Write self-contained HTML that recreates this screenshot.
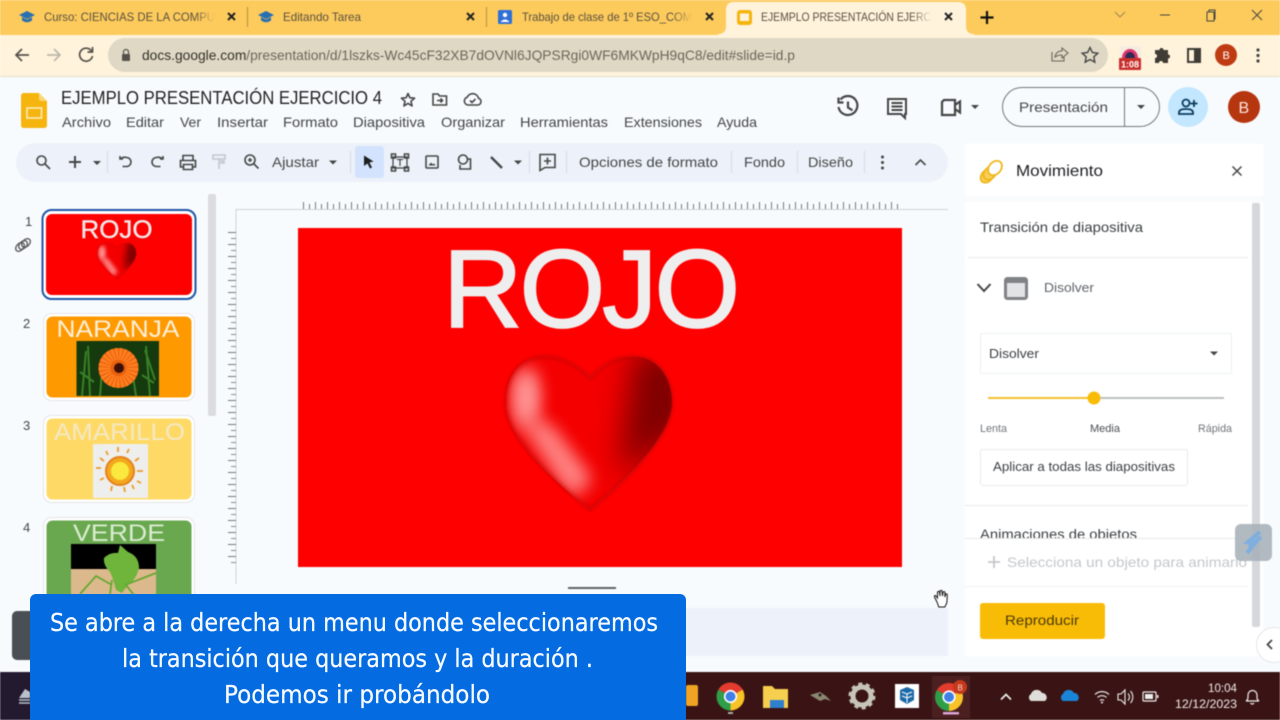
<!DOCTYPE html>
<html lang="es"><head><meta charset="utf-8"><title>Presentación</title>
<style>
html,body{margin:0;padding:0;width:1280px;height:720px;overflow:hidden;background:#f8fbfd}
svg{display:block;position:absolute;left:0;top:0}
text{font-family:"Liberation Sans",Arial,sans-serif;fill:#3c4043}
.i{fill:none;stroke:#444746;stroke-width:1.6}
.f{fill:#444746;stroke:none}
.m{font-size:14px;fill:#444746}
.t{font-size:12px;fill:#5a5040}
.cap{font-family:"DejaVu Sans","Liberation Sans",sans-serif;font-size:25px;fill:#f6faff;stroke:#f6faff;stroke-width:.25}
</style></head><body>
<svg width="1280" height="720" viewBox="0 0 1280 720" xmlns="http://www.w3.org/2000/svg" style="filter:blur(.45px)">
<defs>
<filter id="b1" filterUnits="userSpaceOnUse" x="0" y="0" width="1280" height="720"><feGaussianBlur stdDeviation="1.500"/></filter>
<filter id="b2" filterUnits="userSpaceOnUse" x="0" y="0" width="1280" height="720"><feGaussianBlur stdDeviation="9"/></filter>
<filter id="b3" filterUnits="userSpaceOnUse" x="0" y="0" width="1280" height="720"><feGaussianBlur stdDeviation="15"/></filter>
<linearGradient id="fade" x1="0" x2="1"><stop offset="0" stop-color="#fdcb5c" stop-opacity="0"/><stop offset="1" stop-color="#fdcb5c"/></linearGradient>
<linearGradient id="fade2" x1="0" x2="1"><stop offset="0" stop-color="#fff3dc" stop-opacity="0"/><stop offset="1" stop-color="#fff3dc"/></linearGradient>
<clipPath id="anim"><rect x="970" y="520" width="280" height="18"/></clipPath>
<clipPath id="hc"><path d="M590 378C575 362 555 355 540 357C519 359 505 378 506 405C507 440 560 485 590 510C620 485 670 440 672 405C673 378 658 358 638 357C622 355 605 362 590 378Z"/></clipPath>
<g id="chrome"><path d="M0 0L-12.100-7A14 14 0 0 1 12.100-7Z" fill="#e33b2e"/><path d="M0 0L12.100-7A14 14 0 0 1 0 14Z" fill="#f7c327"/><path d="M0 0L0 14A14 14 0 0 1-12.100-7Z" fill="#2f9e48"/><circle r="6.600" fill="#fff"/><circle r="5" fill="#3f7fe6"/></g>
<path id="cap" d="M0-6L8-2 0 2-8-2Z M-5 0V3.500Q0 7 5 3.500V0L0 2.600Z"/>
<g id="heart">
<g clip-path="url(#hc)">
<rect x="490" y="340" width="200" height="180" fill="#f40000"/>
<path d="M635 350L695 350 695 425 620 475 625 420Z" fill="#800000" filter="url(#b3)"/>
<ellipse cx="526" cy="398" rx="10" ry="28" fill="#ff9a9a" filter="url(#b2)"/>
<ellipse cx="526" cy="398" rx="10" ry="28" fill="#ff9a9a" filter="url(#b2)"/>
<path d="M522 420L548 425 590 480 572 495Z" fill="#ff8c8c" filter="url(#b2)"/>
<path d="M522 420L548 425 590 480 572 495Z" fill="#ff8c8c" opacity=".5" filter="url(#b2)"/>
</g>
<path d="M590 378C575 362 555 355 540 357C519 359 505 378 506 405C507 440 560 485 590 510C620 485 670 440 672 405C673 378 658 358 638 357C622 355 605 362 590 378Z" fill="none" stroke="#a80a0a" stroke-width="2.500" opacity=".55" filter="url(#b1)"/>
</g>
</defs>

<!-- page -->
<rect width="1280" height="720" fill="#f8fbfd"/>

<!-- tab strip -->
<rect width="1280" height="35" fill="#fdcb5c"/>
<path d="M718 34Q726 34 726 26V10Q726 2 734 2H958Q966 2 966 10V26Q966 34 974 34V35H718Z" fill="#fff3dc"/>
<use href="#cap" x="27" y="17" fill="#2a6fb0"/>
<text x="44" y="21" class="t" textLength="171" lengthAdjust="spacingAndGlyphs">Curso: CIENCIAS DE LA COMPU</text>
<rect x="195" y="8" width="20" height="18" fill="url(#fade)"/>
<path d="M228 13l7 7m0-7l-7 7" stroke="#222" stroke-width="2"/>
<rect x="247" y="7" width="1" height="20" fill="#b09040"/>
<use href="#cap" x="266" y="17" fill="#2a6fb0"/>
<text x="283" y="21" class="t" textLength="78" lengthAdjust="spacingAndGlyphs">Editando Tarea</text>
<path d="M467 13l7 7m0-7l-7 7" stroke="#222" stroke-width="2"/>
<rect x="486" y="7" width="1" height="20" fill="#b09040"/>
<rect x="498" y="10" width="14" height="14" rx="1.500" fill="#2f6fd8"/><circle cx="505" cy="15" r="2.200" fill="#fff"/><path d="M500.500 22q4.500-5 9 0z" fill="#fff"/>
<text x="522" y="21" class="t" textLength="170" lengthAdjust="spacingAndGlyphs">Trabajo de clase de 1º ESO_COM</text>
<rect x="672" y="8" width="20" height="18" fill="url(#fade)"/>
<path d="M706 13l7 7m0-7l-7 7" stroke="#222" stroke-width="2"/>
<rect x="737" y="10" width="15" height="15" rx="3" fill="#f5b50f"/><rect x="740" y="13.500" width="9" height="7.500" fill="#fff3dc"/>
<text x="761" y="21" class="t" textLength="170" lengthAdjust="spacingAndGlyphs">EJEMPLO PRESENTACIÓN EJERC</text>
<rect x="912" y="8" width="20" height="18" fill="url(#fade2)"/>
<path d="M945 13l7 7m0-7l-7 7" stroke="#222" stroke-width="2"/>
<path d="M987 11v13M980.500 17.500h13" stroke="#111" stroke-width="2.200"/>
<path d="M1115 12l5 5 5-5" fill="none" stroke="#9c8750" stroke-width="1"/>
<path d="M1160 15h10" stroke="#444" stroke-width="1"/>
<path d="M1207 12h7v9h-7zM1209 12v-2h6v9h-1" fill="none" stroke="#444" stroke-width="1"/>
<path d="M1252 10l10 10m0-10l-10 10" stroke="#444" stroke-width="1"/>

<!-- address bar -->
<rect y="35" width="1280" height="41" fill="#fff3dc"/>
<rect y="76" width="1280" height="1" fill="#e5ddcb"/>
<rect x="108" y="38" width="1000" height="34" rx="17" fill="#dfd8c5"/>
<path d="M29 55H16m6-6l-6 6 6 6" fill="none" stroke="#55514a" stroke-width="1.700"/>
<path d="M47 55h13m-6-6l6 6-6 6" fill="none" stroke="#bdb7a8" stroke-width="1.700"/>
<path d="M91.500 51A6.500 6.500 0 1 0 92.500 56M92.500 47v5h-5" fill="none" stroke="#55514a" stroke-width="1.700"/>
<rect x="122" y="54" width="8" height="7" rx="1" fill="#55514a"/><path d="M123.500 54v-2a2.500 2.500 0 0 1 5 0v2" fill="none" stroke="#55514a" stroke-width="1.200"/>
<text x="142" y="60" font-size="14" textLength="653" lengthAdjust="spacingAndGlyphs" style="fill:#6d675a"><tspan style="fill:#33302a">docs.google.com</tspan>/presentation/d/1lszks-Wc45cF32XB7dOVNl6JQPSRgi0WF6MKWpH9qC8/edit#slide=id.p</text>
<path d="M1052 52v9h12v-4M1055 57q1-6 7-6v-3l6 5-6 5v-3q-4 0-7 2z" fill="none" stroke="#6a665c" stroke-width="1.100"/>
<path d="M1090 47.500l2.400 5 5.400.7-4 3.700 1 5.300-4.800-2.700-4.800 2.700 1-5.300-4-3.700 5.400-.7z" fill="none" stroke="#444" stroke-width="1.400"/>
<rect x="1120" y="46" width="21" height="24" rx="2" fill="#f4ece0"/><path d="M1122 58a8 9 0 0 1 16 0z" fill="#e0356f"/><path d="M1125 58a5 6 0 0 1 10 0z" fill="#2b2b55"/>
<rect x="1119" y="58" width="22" height="12" rx="1" fill="#c9302c"/><text x="1121" y="67.500" font-size="9" font-weight="bold" style="fill:#fff">1:08</text>
<path d="M1155 50h4.500a2 2 0 0 1 4 0h4.500v4.500a2 2 0 0 1 0 4v4.500h-5a2 2 0 0 0-4 0H1155v-5a2 2 0 0 0 0-4z" fill="#3f3c36"/>
<rect x="1188" y="49" width="12" height="13" fill="none" stroke="#3f3c36" stroke-width="2"/><rect x="1194" y="49" width="6" height="13" fill="#3f3c36"/>
<circle cx="1226" cy="55" r="11" fill="#bf3b12"/><text x="1222.500" y="59" font-size="11" style="fill:#fff">B</text>
<circle cx="1258" cy="50" r="1.600" fill="#444"/><circle cx="1258" cy="55.500" r="1.600" fill="#444"/><circle cx="1258" cy="61" r="1.600" fill="#444"/>

<!-- docs header -->
<path d="M24 93H39L47 101V125Q47 128 44 128H24Q21 128 21 125V96Q21 93 24 93Z" fill="#f6b40f"/>
<path d="M39 93L47 101H41Q39 101 39 99Z" fill="#fbd873"/>
<rect x="27" y="108" width="14.500" height="10" fill="none" stroke="#fce5a6" stroke-width="1.800"/>
<text x="61" y="104" font-size="18" textLength="321" lengthAdjust="spacingAndGlyphs" style="fill:#1f1f1f">EJEMPLO PRESENTACIÓN EJERCICIO 4</text>
<path d="M408 93.500l1.900 4.300 4.700.4-3.600 3.100 1.100 4.600-4.100-2.500-4.100 2.500 1.100-4.600-3.600-3.100 4.700-.4z" class="i" stroke-linejoin="round"/>
<path d="M433 94h5l1.500 2h7v9h-13.500zM437 100.500h5.500m-2-2l2 2-2 2" class="i" stroke-width="1.300"/>
<path d="M468 105a4 4 0 0 1-.8-7.800 6 6 0 0 1 11.300 1 3.500 3.500 0 0 1-.5 6.800zM470 100.500l2 2 3.500-3.500" class="i" stroke-width="1.300"/>
<text x="62" y="127" class="m" textLength="49" lengthAdjust="spacingAndGlyphs">Archivo</text>
<text x="126" y="127" class="m" textLength="38" lengthAdjust="spacingAndGlyphs">Editar</text>
<text x="180" y="127" class="m" textLength="21" lengthAdjust="spacingAndGlyphs">Ver</text>
<text x="217" y="127" class="m" textLength="51" lengthAdjust="spacingAndGlyphs">Insertar</text>
<text x="283" y="127" class="m" textLength="55" lengthAdjust="spacingAndGlyphs">Formato</text>
<text x="353" y="127" class="m" textLength="72" lengthAdjust="spacingAndGlyphs">Diapositiva</text>
<text x="441" y="127" class="m" textLength="64" lengthAdjust="spacingAndGlyphs">Organizar</text>
<text x="520" y="127" class="m" textLength="88" lengthAdjust="spacingAndGlyphs">Herramientas</text>
<text x="624" y="127" class="m" textLength="78" lengthAdjust="spacingAndGlyphs">Extensiones</text>
<text x="717" y="127" class="m" textLength="40" lengthAdjust="spacingAndGlyphs">Ayuda</text>

<!-- header right icons -->
<path d="M840.500 99.500A9.500 9.500 0 1 1 838.500 107M838.500 97.500v5h5M848 101.500v6l4.500 2.800" fill="none" stroke="#444746" stroke-width="2.200"/>
<path d="M888 99h18v15h-1v4l-4-4h-13zM891.500 103h11M891.500 106.500h11M891.500 110h11" fill="none" stroke="#444746" stroke-width="2"/>
<path d="M944 100h11v15h-13v-13zM955 105l5-3.500v11l-5-3.500" fill="none" stroke="#444746" stroke-width="2.200"/>
<path d="M971 105h8l-4 4z" fill="#444746"/>
<rect x="1002.500" y="87.500" width="157" height="39" rx="19.500" fill="#f8fbfd" stroke="#747775"/>
<rect x="1124" y="87" width="1" height="40" fill="#747775"/>
<text x="1019" y="112" font-size="14" textLength="89" lengthAdjust="spacingAndGlyphs" style="fill:#444746">Presentación</text>
<path d="M1137 105h8l-4 4z" fill="#444746"/>
<circle cx="1188" cy="107" r="20" fill="#c2e7ff"/>
<circle cx="1186" cy="103" r="3.500" fill="none" stroke="#0a3a5c" stroke-width="1.800"/><path d="M1179 114v-1.500q0-3.500 7-3.500t7 3.500v1.500zM1194 100v7M1190.500 103.500h7" fill="none" stroke="#0a3a5c" stroke-width="1.800"/>
<circle cx="1244" cy="107" r="16" fill="#b5360f"/><text x="1238.500" y="113" font-size="16" style="fill:#fbe7dc">B</text>

<!-- toolbar -->
<rect x="16" y="143" width="932" height="39" rx="19.500" fill="#edf2fa"/>
<rect x="355" y="146" width="29" height="32" rx="3" fill="#d3e3fd"/>
<g class="i"><circle cx="41.500" cy="160.500" r="4.500"/><path d="M45 164l5 5"/></g>
<path d="M75 156v12M69 162h12" stroke="#444746" stroke-width="2"/>
<path d="M93 161h8l-4 4z" class="f"/>
<rect x="107" y="151" width="1" height="22" fill="#d5dbe3"/>
<path d="M123 159h-3v-3M120.500 159q3-2.500 6-1.500a4.500 4.500 0 0 1 0 9h-4" class="i"/>
<path d="M160 159h3v-3M162.500 159q-3-2.500-6-1.500a4.500 4.500 0 0 0 0 9h4" class="i"/>
<path d="M183 161v-5.500h10v5.500M183 167h-2.500v-6.500h15v6.500h-2.500M183.500 164.500h9v5h-9z" class="i"/>
<path d="M213 155h12v4h-12zM219 159v2h5v2h-5v6" fill="none" stroke="#c3c7cc" stroke-width="1.600"/>
<circle cx="250" cy="160" r="5" class="i"/><path d="M254 164l4.500 4.500M248 160h4M250 158v4" class="i"/>
<text x="272" y="167" font-size="14" textLength="47" lengthAdjust="spacingAndGlyphs" style="fill:#444746">Ajustar</text>
<path d="M329 160.500h8l-4 4z" class="f"/>
<rect x="350" y="151" width="1" height="22" fill="#d5dbe3"/>
<path d="M364 155.500l9.500 6-4 1 2.500 5-2 1-2.500-5-3.500 2.500z" fill="#1f1f1f"/>
<rect x="393" y="157" width="14" height="11" fill="none" stroke="#444746" stroke-width="1.300"/>
<path d="M391.500 154h4v4h-4zM404.500 154h4v4h-4zM391.500 167h4v4h-4zM404.500 167h4v4h-4z" class="i" stroke-width="1.300"/>
<path d="M397 159.500h6M400 159.500v6.500" fill="none" stroke="#444746" stroke-width="1.200"/>
<rect x="426" y="156" width="12" height="12" rx="1" class="i"/><path d="M428.500 165.500l2.500-3 2 2 1-1.200 1.500 2.200z" class="f"/>
<circle cx="463" cy="159.500" r="4.500" class="i"/><path d="M460 165v4h10.500v-10h-3" class="i"/>
<path d="M491 157l11 11" stroke="#444746" stroke-width="2.400"/>
<path d="M514 160.500h8l-4 4z" class="f"/>
<rect x="529" y="151" width="1" height="22" fill="#d5dbe3"/>
<path d="M540 154.500h15v13h-10l-5 3zM547.500 157.500v7M544 161h7" class="i"/>
<rect x="566" y="151" width="1" height="22" fill="#d5dbe3"/>
<text x="579" y="167" font-size="14" textLength="139" lengthAdjust="spacingAndGlyphs" style="fill:#444746">Opciones de formato</text>
<rect x="731" y="151" width="1" height="22" fill="#d5dbe3"/>
<text x="744" y="167" font-size="14" textLength="41" lengthAdjust="spacingAndGlyphs" style="fill:#444746">Fondo</text>
<rect x="797" y="151" width="1" height="22" fill="#d5dbe3"/>
<text x="808" y="167" font-size="14" textLength="45" lengthAdjust="spacingAndGlyphs" style="fill:#444746">Diseño</text>
<rect x="864" y="151" width="1" height="22" fill="#d5dbe3"/>
<circle cx="882.500" cy="157" r="1.500" fill="#444746"/><circle cx="882.500" cy="162.500" r="1.500" fill="#444746"/><circle cx="882.500" cy="168" r="1.500" fill="#444746"/>
<path d="M915.500 165l5-5 5 5" class="i"/>

<!-- filmstrip -->
<rect x="208" y="194" width="8" height="222" rx="2" fill="#dadce0"/>
<text x="25" y="226" font-size="13" style="fill:#444746">1</text>
<text x="23" y="328" font-size="13" style="fill:#444746">2</text>
<text x="23" y="430" font-size="13" style="fill:#444746">3</text>
<text x="23" y="532" font-size="13" style="fill:#444746">4</text>
<g fill="none" stroke="#555" stroke-width="1.300"><ellipse cx="20" cy="247" rx="5" ry="3.500" transform="rotate(-45 20 247)"/><ellipse cx="23" cy="245" rx="5" ry="3.500" transform="rotate(-45 23 245)"/><ellipse cx="26" cy="243" rx="5" ry="3.500" transform="rotate(-45 26 243)"/></g>

<rect x="42.500" y="210" width="153" height="89" rx="9" fill="#fff" stroke="#1f56a8" stroke-width="2"/>
<rect x="46" y="214" width="146" height="81" rx="6" fill="#fe0000"/>
<text x="80.500" y="238" font-size="25" textLength="72" lengthAdjust="spacingAndGlyphs" style="fill:#f2e8e8;stroke:#f2e8e8;stroke-width:.4">ROJO</text>
<use href="#heart" transform="translate(117 248) scale(.234) translate(-590 -378)"/>

<rect x="43.500" y="313.500" width="151" height="87" rx="8" fill="#fff" stroke="#e3e5e8"/>
<rect x="46.500" y="316.500" width="145" height="81" rx="6" fill="#ff9900"/>
<text x="56.500" y="337" font-size="24" textLength="123" lengthAdjust="spacingAndGlyphs" style="fill:#fdf0d8">NARANJA</text>
<rect x="76.500" y="341" width="82.500" height="55" fill="#143a0e"/>
<path d="M82 396l4-45M90 396l-2-50M150 396l-4-50M155 380l-10-30M100 396l2-25M136 396l-3-20M80 372l14 10M142 375l12 8" stroke="#3a8027" stroke-width="2" fill="none"/>
<circle cx="118.500" cy="368" r="20" fill="#e8600e"/>
<circle cx="118.500" cy="368" r="14" fill="none" stroke="#ff7f1f" stroke-width="12" stroke-dasharray="2.500 1"/>
<circle cx="119" cy="368" r="5" fill="#3a1008"/>

<rect x="43.500" y="415.500" width="151" height="87" rx="8" fill="#fff" stroke="#e3e5e8"/>
<rect x="46.500" y="418.500" width="145" height="81" rx="6" fill="#ffd966"/>
<text x="54" y="440" font-size="24" textLength="131" lengthAdjust="spacingAndGlyphs" style="fill:#f3e9c4">AMARILLO</text>
<rect x="93" y="444" width="55" height="54" fill="#eeeeec"/>
<circle cx="120" cy="471" r="14" fill="#f4a81e" stroke="#e5811c" stroke-width="2"/><circle cx="120" cy="471" r="9" fill="#fbe93f"/>
<path d="M118 447v5M129 449l-2 4M96 468h5M137 471h6M100 458l4 3M139 458l-4 3M100 480l4-2M141 483l-4-2M111 491l1-5M125 492l-1-5M134 489l-2-4M106 451l2 4" stroke="#ec9a2a" stroke-width="1.800"/>

<rect x="43.500" y="517.500" width="151" height="87" rx="8" fill="#fff" stroke="#e3e5e8"/>
<rect x="46.500" y="520.500" width="145" height="81" rx="6" fill="#6aa84f"/>
<text x="73" y="541" font-size="24" textLength="92" lengthAdjust="spacingAndGlyphs" style="fill:#d9ecd0">VERDE</text>
<rect x="71" y="544" width="85" height="25" fill="#000"/><rect x="71" y="569" width="85" height="30" fill="#dcb98c"/>
<path d="M120 545L128 552Q139 556 139 568Q136 580 128 585L122 593L116 590Q113 578 110 572Q103 565 104 558Q110 552 118 553Z" fill="#6fb53c"/>
<path d="M80 594L96 576L112 585M156 573L125 585M126 585l8 10M112 580l-2 14" stroke="#66a832" stroke-width="1.800" fill="none"/>

<!-- canvas / rulers -->
<rect x="236" y="209" width="712" height="1" fill="#cfd3d7"/>
<rect x="235.500" y="209" width="1" height="375" fill="#cfd3d7"/>
<path d="M303 206.500H901" stroke="#74787c" stroke-width="5" stroke-dasharray="1 5" fill="none"/>
<path d="M303 205.500H901" stroke="#74787c" stroke-width="7" stroke-dasharray="1 11" fill="none"/>
<path d="M233.500 232V568" stroke="#8a8e93" stroke-width="5" stroke-dasharray="1 5"/>
<path d="M232 232V568" stroke="#74787c" stroke-width="8" stroke-dasharray="1 11"/>
<rect x="298" y="228" width="604" height="339" fill="#fe0000"/>
<text x="443" y="327" font-size="110" textLength="297" lengthAdjust="spacing" style="fill:#eeeeee;stroke:#eeeeee;stroke-width:1.800">ROJO</text>
<use href="#heart"/>
<rect x="568" y="587" width="48" height="2" fill="#5f6368"/>
<rect x="236" y="608" width="712" height="48" fill="#edf2fa"/>

<!-- hand cursor -->
<path d="M937 602l-2.500-5q-.5-1.500 1-1.500l2 2.500v-6q1.500-1.500 2 0l.5 4v-5q1.500-1.500 2 0l.5 5 .5-4q1.500-1 2 .5l-.2 4.500 1-3q1.500-.5 1.500 1l-.5 8-2 4h-6z" fill="#fff" stroke="#111" stroke-width="1"/>

<!-- side panel -->
<rect x="965" y="144" width="298" height="512" fill="#fff"/>
<rect x="965" y="196" width="298" height="6" fill="#fafbfc"/>
<g fill="#f8cf5a" stroke="#f0b71a" stroke-width="1.800"><ellipse cx="987" cy="176" rx="5.500" ry="7.500" transform="rotate(40 987 176)"/><ellipse cx="990" cy="173" rx="5.500" ry="7.500" transform="rotate(40 990 173)"/><ellipse cx="995" cy="168" rx="6" ry="8" transform="rotate(40 995 168)" fill="#fff"/></g>
<text x="1016" y="176" font-size="16" textLength="87" lengthAdjust="spacingAndGlyphs" style="fill:#202124">Movimiento</text>
<path d="M1232.500 166.500l9 9m0-9l-9 9" stroke="#444746" stroke-width="1.500"/>
<rect x="1252" y="203" width="8" height="424" rx="2" fill="#d5d7da"/>
<text x="980" y="232" font-size="14" textLength="163" lengthAdjust="spacingAndGlyphs" style="fill:#3c4043">Transición de diapositiva</text>
<rect x="968" y="257" width="280" height="1" fill="#e6e8ea"/>
<path d="M977.500 284l6.500 7 6.500-7" fill="none" stroke="#444746" stroke-width="2"/>
<rect x="1005.500" y="278.500" width="21" height="20" rx="2" fill="#e2e3e5" stroke="#808285" stroke-width="3"/>
<rect x="1005" y="278" width="22" height="5" fill="#808285"/>
<text x="1044" y="292" font-size="13" textLength="50" lengthAdjust="spacingAndGlyphs" style="fill:#5f6368">Disolver</text>
<rect x="980.500" y="333.500" width="251" height="40" rx="1" fill="#fff" stroke="#eceef0"/>
<text x="989" y="358" font-size="13" textLength="50" lengthAdjust="spacingAndGlyphs" style="fill:#3c4043">Disolver</text>
<path d="M1210 351.500h8l-4 4z" fill="#444746"/>
<rect x="988" y="397" width="106" height="2" fill="#f3c02f"/><rect x="1094" y="397" width="130" height="2" fill="#bdbfc2"/>
<circle cx="1094" cy="398" r="6.500" fill="#f9bc06"/>
<text x="980" y="432" font-size="11" textLength="27" lengthAdjust="spacingAndGlyphs" style="fill:#70757a">Lenta</text>
<text x="1090" y="432" font-size="11" textLength="30" lengthAdjust="spacingAndGlyphs" style="fill:#4a4d51">Media</text>
<text x="1198" y="432" font-size="11" textLength="34" lengthAdjust="spacingAndGlyphs" style="fill:#70757a">Rápida</text>
<rect x="980.500" y="449.500" width="207" height="36" rx="2" fill="#fff" stroke="#e8eaed"/>
<text x="993" y="471" font-size="12.500" textLength="182" lengthAdjust="spacingAndGlyphs" style="fill:#3c4043">Aplicar a todas las diapositivas</text>
<rect x="965" y="505" width="283" height="1" fill="#e6e8ea"/>
<text x="980" y="539" font-size="14" textLength="157" lengthAdjust="spacingAndGlyphs" clip-path="url(#anim)" style="fill:#3c4043">Animaciones de objetos</text>
<rect x="965" y="538" width="283" height="1" fill="#e6e8ea"/>
<path d="M994 556v12M988 562h12" stroke="#c5c7ca" stroke-width="1.800"/>
<text x="1007" y="567" font-size="14" textLength="240" lengthAdjust="spacingAndGlyphs" style="fill:#c5c7ca">Selecciona un objeto para animarlo</text>
<rect x="965" y="586" width="283" height="1" fill="#eef0f2"/>
<rect x="980" y="603" width="125" height="36" rx="3" fill="#f9bc06"/>
<text x="1005" y="625" font-size="14" textLength="74" lengthAdjust="spacingAndGlyphs" style="fill:#4a3a0a">Reproducir</text>
<rect x="1235" y="524" width="37" height="37" rx="6" fill="#a9b2ba" opacity=".9"/>
<path d="M1260 532l-12 10h8l-9 11M1261 537l-12 10" stroke="#7faee0" stroke-width="4" fill="none"/>
<circle cx="1274" cy="645" r="17.500" fill="#fff" stroke="#e4e6e8"/>
<path d="M1272 640l-4.500 4.500 4.500 4.500" fill="none" stroke="#444746" stroke-width="1.800"/>

<!-- taskbar -->
<rect y="672" width="1280" height="48" fill="#3a1414"/>
<rect y="672" width="30" height="48" fill="#231a30"/>
<path d="M19 698l6-9 5 3v6z" fill="#b9c2cc"/><path d="M19 700h11M19 703h11" stroke="#b9c2cc" stroke-width="1.500"/>
<rect x="686" y="685" width="12" height="21" rx="2" fill="#f0a423"/>
<use href="#chrome" x="730.500" y="696.500"/>
<path d="M763 686h9l3 3h13v19h-25z" fill="#f7cf4f"/><rect x="770" y="700" width="14" height="8" fill="#2f7fd0"/>
<path d="M810 695l10-3 6 4 5 5-6-2-5 2-5-3z" fill="#8c8672"/><circle cx="820" cy="695" r="1.500" fill="#222"/>
<circle cx="862" cy="696" r="9" fill="none" stroke="#c7c4ba" stroke-width="5"/><circle cx="862" cy="696" r="12" fill="none" stroke="#c7c4ba" stroke-width="3" stroke-dasharray="4 3.500"/>
<rect x="895" y="684" width="24" height="24" fill="#fff"/>
<path d="M900 690l7-3 7 3v10l-7 4-7-4z" fill="#1b6aa8"/><path d="M902 692l5 2 5-2M902 696l5 2 5-2M907 694v9" stroke="#fff" stroke-width="1" fill="none"/>
<rect x="932" y="676" width="38" height="42" fill="#4c2020"/>
<use href="#chrome" x="949" y="697"/>
<circle cx="960" cy="687" r="7" fill="#c5381c"/><text x="957.500" y="690.500" font-size="8" style="fill:#f8d8c8">B</text>
<rect x="943" y="712" width="16" height="2.500" fill="#d9a6d8"/>
<rect x="728" y="712" width="5" height="2" fill="#aaa"/>
<path d="M1001 699.500l5-5 5 5" fill="none" stroke="#eee" stroke-width="1.700"/>
<path d="M1031 701a4 4 0 0 1 0-7 6 6 0 0 1 11-1 4.500 4.500 0 0 1 3 8z" fill="#e0dedb"/>
<path d="M1063 701a4 4 0 0 1 0-7 6 6 0 0 1 11-1 4.500 4.500 0 0 1 3 8z" fill="#1a84d8"/>
<path d="M1095 694.500a10 10 0 0 1 14 0M1097.500 697.500a6.500 6.500 0 0 1 9 0M1100 700.500a3 3 0 0 1 4 0" fill="none" stroke="#eee" stroke-width="1.200"/><circle cx="1102" cy="702.500" r="1" fill="#eee"/>
<path d="M1118 694h3l4-4v14l-4-4h-3zM1128 693.500a5 5 0 0 1 0 7M1130.500 691a9 9 0 0 1 0 12" fill="none" stroke="#eee" stroke-width="1.100"/>
<rect x="1143" y="692" width="13" height="9" rx="1" fill="none" stroke="#eee" stroke-width="1.200"/><rect x="1145" y="694" width="8" height="5" fill="#eee"/><rect x="1157" y="695" width="1.500" height="3" fill="#eee"/>
<text x="1208" y="692" font-size="12" textLength="29" lengthAdjust="spacingAndGlyphs" style="fill:#f0eaea">10:04</text>
<text x="1175" y="708" font-size="12" textLength="62" lengthAdjust="spacingAndGlyphs" style="fill:#f0eaea">12/12/2023</text>
<path d="M1246 701q2-1 2-4v-2a4.500 4.500 0 0 1 9 0v2q0 3 2 4zM1250.500 703a2 2 0 0 0 3.500 0" fill="none" stroke="#eee" stroke-width="1.200"/>

<!-- dark button behind caption -->
<rect x="12" y="611" width="30" height="49" rx="5" fill="#4a4e55"/>
</svg>

<!-- caption -->
<svg width="1280" height="720" viewBox="0 0 1280 720" xmlns="http://www.w3.org/2000/svg">
<rect x="30" y="594" width="656" height="140" rx="6" fill="#046be0"/>
<text x="50" y="631" class="cap" textLength="608" lengthAdjust="spacingAndGlyphs">Se abre a la derecha un menu donde seleccionaremos</text>
<text x="122" y="667" class="cap" textLength="471" lengthAdjust="spacingAndGlyphs">la transición que queramos y la duración .</text>
<text x="224" y="703" class="cap" textLength="266" lengthAdjust="spacingAndGlyphs">Podemos ir probándolo</text>
</svg>
</body></html>
